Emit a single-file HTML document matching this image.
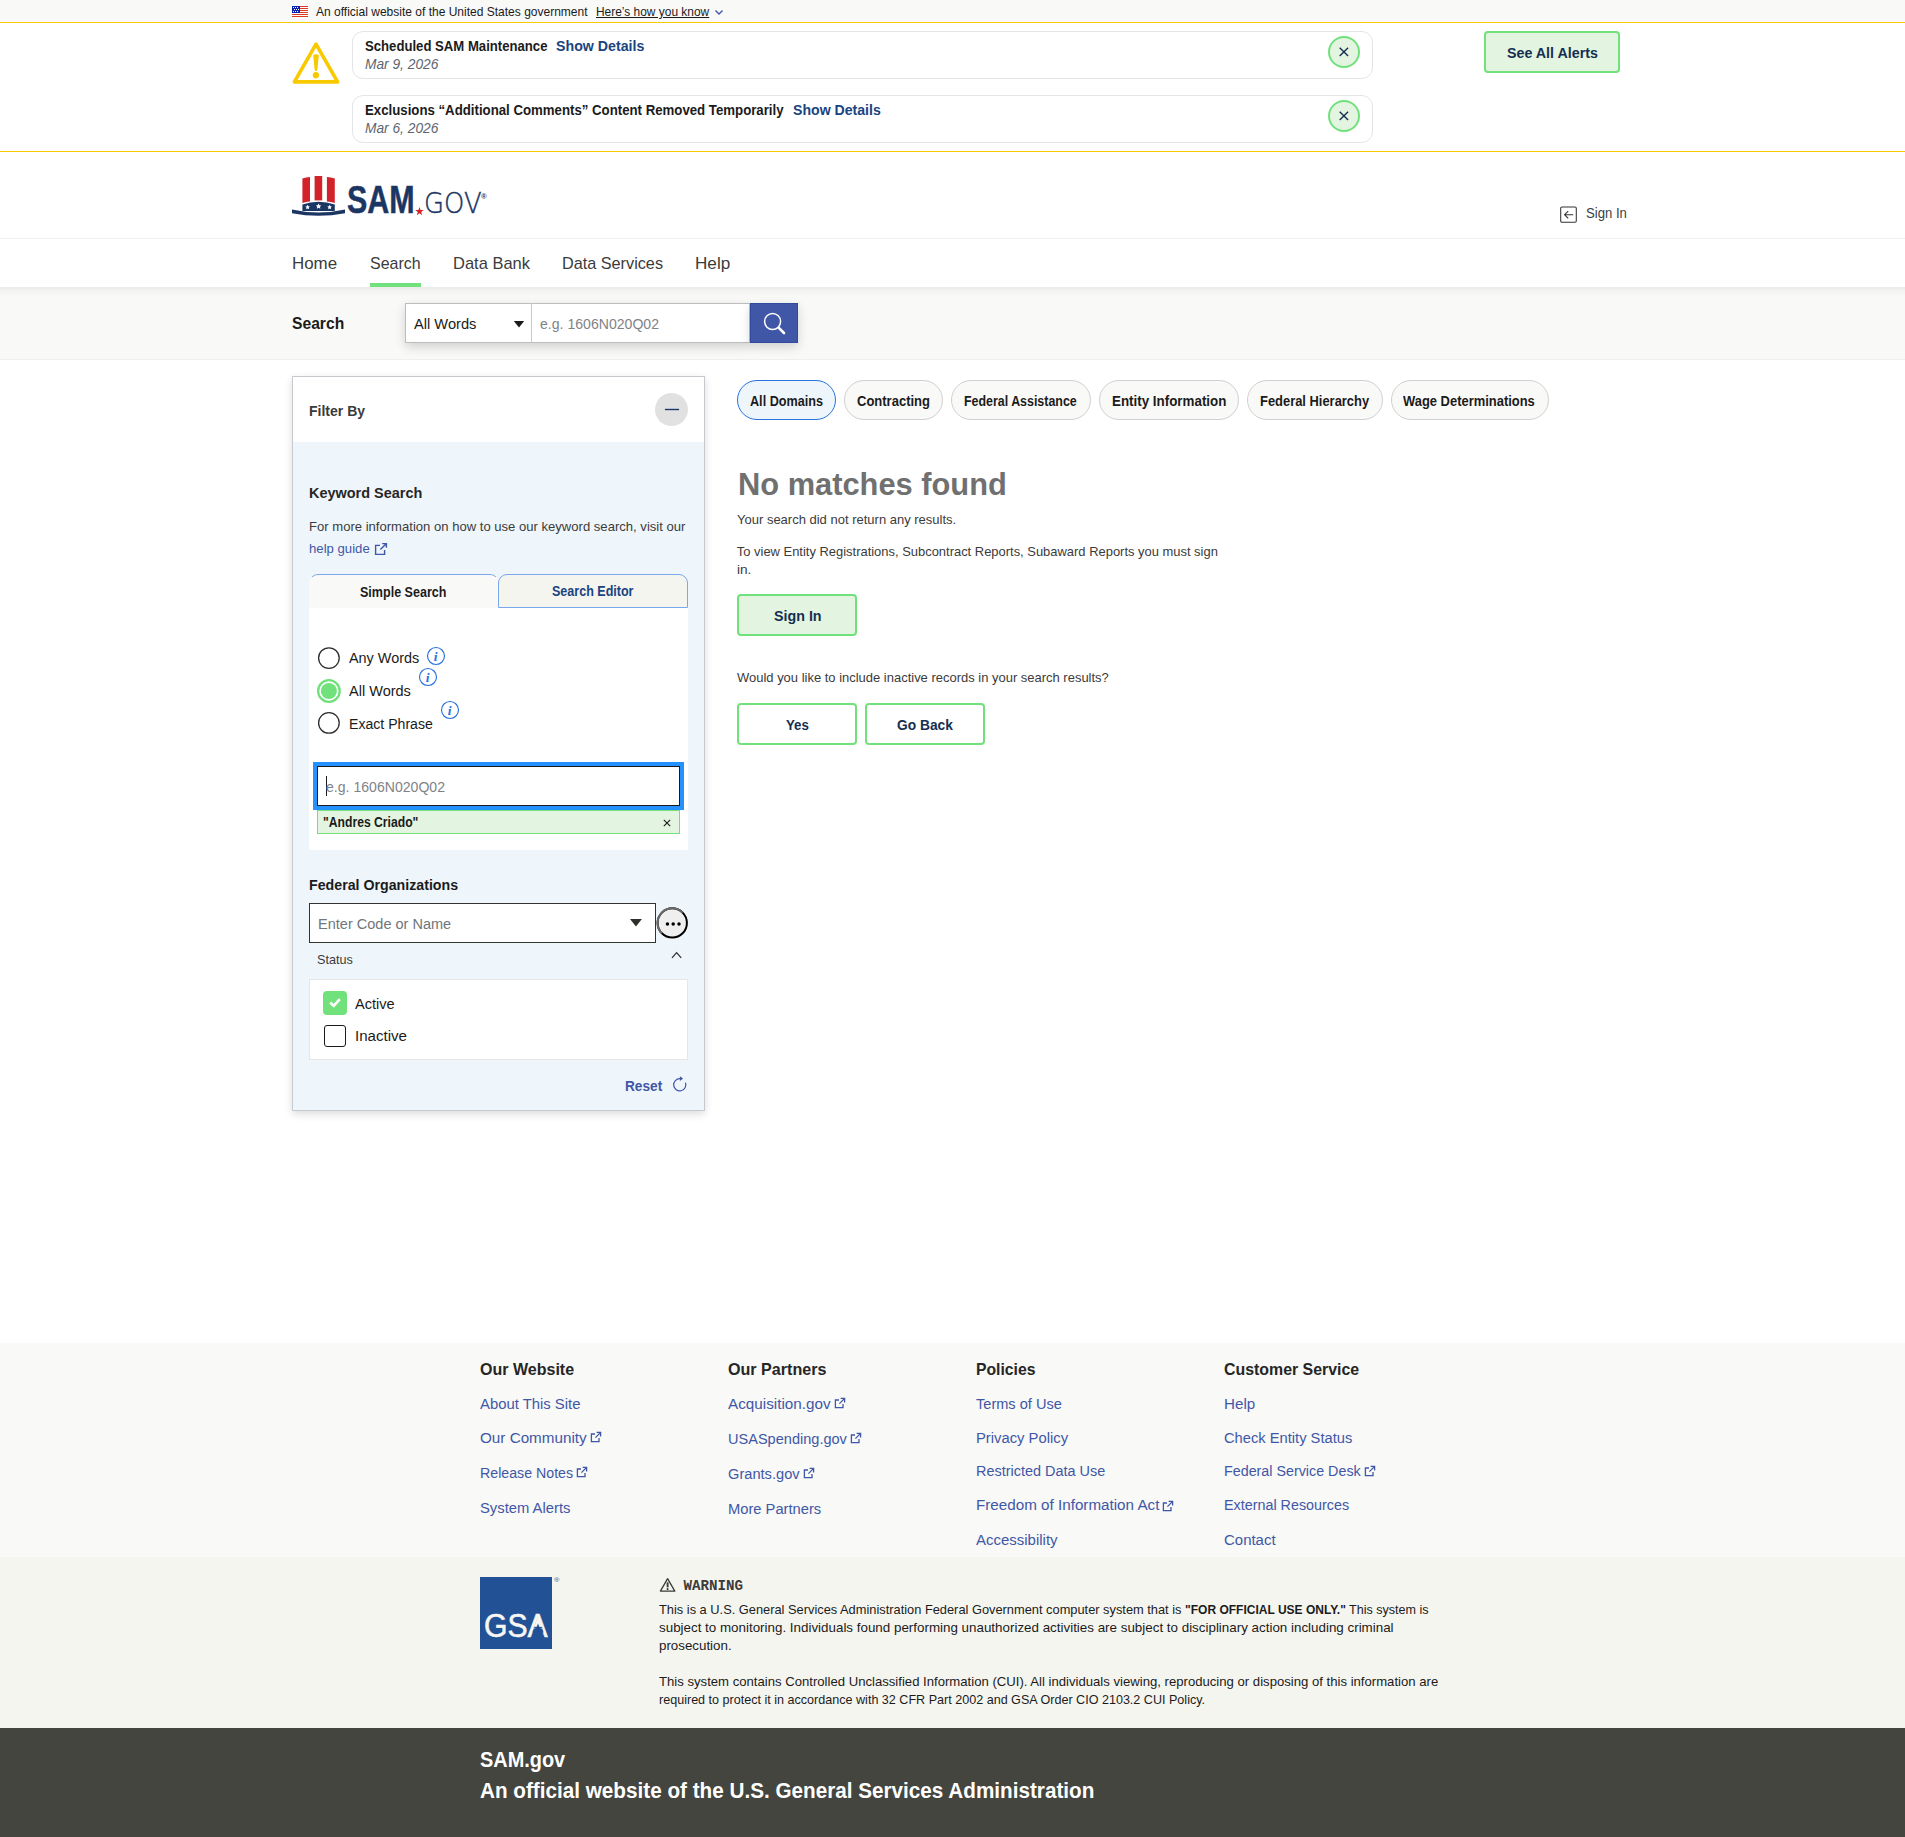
<!DOCTYPE html>
<html lang="en"><head><meta charset="utf-8"><title>SAM.gov | Search</title>
<style>
html,body{margin:0;padding:0}
body{width:1905px;height:1837px;position:relative;overflow:hidden;background:#fff;font-family:'Liberation Sans',sans-serif;color:#1b1b1b}
#page div,#page svg,#page span.t{position:absolute}
#page div{box-sizing:border-box}
span.t{white-space:pre;line-height:1;transform-origin:0 50%}
</style></head><body><div id="page" style="position:absolute;left:0;top:0;width:1905px;height:1837px">
<div style="left:0px;top:0px;width:1905px;height:22px;background:#f9f9f7"></div>
<div style="left:0px;top:22px;width:1905px;height:1px;background:#f9c900"></div>
<div style="left:0px;top:151px;width:1905px;height:1px;background:#f9c900"></div>
<div style="left:352px;top:31px;width:1021px;height:48px;border:1px solid #e4e5e6;border-radius:11px;background:#fff"></div>
<div style="left:1328px;top:36px;width:32px;height:32px;border:2px solid #70e17b;border-radius:50%;background:#e3f5e1"></div>
<div style="left:352px;top:95px;width:1021px;height:48px;border:1px solid #e4e5e6;border-radius:11px;background:#fff"></div>
<div style="left:1328px;top:100px;width:32px;height:32px;border:2px solid #70e17b;border-radius:50%;background:#e3f5e1"></div>
<div style="left:1484px;top:31px;width:136px;height:42px;border:2px solid #70e17b;border-radius:4px;background:#e3f5e1"></div>
<div style="left:0px;top:238px;width:1905px;height:1px;background:#f0f0ee"></div>
<div style="left:370px;top:283px;width:51px;height:4px;background:#70e17b"></div>
<div style="left:0px;top:287px;width:1905px;height:72px;background:linear-gradient(#ebebe9 0,#f5f5f3 5px,#f9f9f7 10px);"></div>
<div style="left:0px;top:359px;width:1905px;height:1px;background:#f0f0f0"></div>
<div style="left:405px;top:303px;width:345px;height:40px;background:#fff;border:1px solid #bdbdbd;box-shadow:0 4px 10px rgba(0,0,0,.16)"></div>
<div style="left:531px;top:303px;width:1px;height:40px;background:#c9c9c9"></div>
<div style="left:750px;top:303px;width:48px;height:40px;background:#3f57a6;border:1px solid #2f4a9f;box-shadow:0 4px 10px rgba(0,0,0,.16)"></div>
<div style="left:292px;top:376px;width:413px;height:735px;background:#eff6fb;border:1px solid #c6cace;box-shadow:0 3px 8px rgba(0,0,0,.14)"></div>
<div style="left:293px;top:377px;width:411px;height:65px;background:#fff"></div>
<div style="left:655px;top:393px;width:33px;height:33px;background:#e1e1e1;border-radius:50%"></div>
<div style="left:309px;top:574px;width:190px;height:35px;background:#f9f9f7;border:1px solid #7aa7ee;border-bottom:none;border-radius:9px 9px 0 0;border-left-color:transparent;border-right-color:transparent"></div>
<div style="left:498px;top:574px;width:190px;height:34px;background:#f5f5f0;border:1px solid #7aa7ee;border-radius:9px 9px 0 0"></div>
<div style="left:309px;top:608px;width:379px;height:242px;background:#fff"></div>
<div style="left:313px;top:762px;width:371px;height:48px;background:#2491ff"></div>
<div style="left:317px;top:766px;width:363px;height:40px;background:#fff;border:1px solid #1b1b1b"></div>
<div style="left:326px;top:776px;width:1px;height:20px;background:#1b1b1b"></div>
<div style="left:317px;top:810px;width:363px;height:24px;background:#e3f5e1;border:1px solid #70e17b"></div>
<div style="left:309px;top:903px;width:347px;height:40px;background:#fff;border:1px solid #33332f"></div>
<div style="left:309px;top:979px;width:379px;height:81px;background:#fff;border:1px solid #e6e6e6"></div>
<div style="left:323px;top:991px;width:24px;height:24px;background:#70e17b;border-radius:4px"></div>
<div style="left:324px;top:1025px;width:22px;height:22px;background:#fff;border:1.5px solid #1b1b1b;border-radius:3px"></div>
<div style="left:737px;top:380px;width:99px;height:40px;background:#eff6fb;border:1px solid #2672de;border-radius:20px"></div>
<div style="left:844px;top:380px;width:98.6px;height:40px;background:#f9f9f7;border:1px solid #d0d0d0;border-radius:20px"></div>
<div style="left:951.1px;top:380px;width:139.7px;height:40px;background:#f9f9f7;border:1px solid #d0d0d0;border-radius:20px"></div>
<div style="left:1099.3px;top:380px;width:139.6px;height:40px;background:#f9f9f7;border:1px solid #d0d0d0;border-radius:20px"></div>
<div style="left:1247.4px;top:380px;width:135.2px;height:40px;background:#f9f9f7;border:1px solid #d0d0d0;border-radius:20px"></div>
<div style="left:1390.6px;top:380px;width:158.4px;height:40px;background:#f9f9f7;border:1px solid #d0d0d0;border-radius:20px"></div>
<div style="left:737px;top:594px;width:120px;height:42px;border:2px solid #70e17b;border-radius:4px;background:#e3f5e1"></div>
<div style="left:737px;top:703px;width:120px;height:42px;border:2px solid #70e17b;border-radius:4px;background:#fff"></div>
<div style="left:865px;top:703px;width:120px;height:42px;border:2px solid #70e17b;border-radius:4px;background:#fff"></div>
<div style="left:0px;top:1343px;width:1905px;height:214px;background:#f9f9f7"></div>
<div style="left:0px;top:1557px;width:1905px;height:171px;background:#f5f5f0"></div>
<div style="left:0px;top:1728px;width:1905px;height:109px;background:#454540"></div>
<div style="left:480px;top:1577px;width:72px;height:72px;background:#235196"></div>
<svg style="left:292px;top:5px;shape-rendering:crispEdges;" width="16" height="13" viewBox="0 0 16 13"><rect width="16" height="13" fill="#fff"/><rect x="8" y="1" width="8" height="1" fill="#dc3a1e"/><rect x="8" y="3" width="8" height="1" fill="#dc3a1e"/><rect x="8" y="5" width="8" height="1" fill="#dc3a1e"/><rect x="8" y="7" width="8" height="1" fill="#dc3a1e"/><rect x="0" y="9" width="16" height="1" fill="#dc3a1e"/><rect x="0" y="11" width="16" height="1" fill="#dc3a1e"/><rect x="0" y="1" width="8" height="7" fill="#0c20b2"/><rect x="1" y="2" width="1" height="1" fill="#fff"/><rect x="3" y="2" width="1" height="1" fill="#fff"/><rect x="5" y="2" width="1" height="1" fill="#fff"/><rect x="2" y="4" width="1" height="1" fill="#fff"/><rect x="4" y="4" width="1" height="1" fill="#fff"/><rect x="6" y="4" width="1" height="1" fill="#fff"/><rect x="1" y="6" width="1" height="1" fill="#fff"/><rect x="3" y="6" width="1" height="1" fill="#fff"/><rect x="5" y="6" width="1" height="1" fill="#fff"/></svg>
<svg style="left:714px;top:9px;" width="10" height="7" viewBox="0 0 10 7"><path d="M1.5 1.5 L5 5 L8.5 1.5" fill="none" stroke="#3f57a6" stroke-width="1.4"/></svg>
<svg style="left:290px;top:40px;" width="52" height="46" viewBox="0 0 52 46"><path d="M26 4.2 L47.6 41.9 L4.4 41.9 Z" fill="none" stroke="#f9c900" stroke-width="3.6" stroke-linejoin="round"/><path d="M23.2 15.6 Q23.2 14.2 26 14.2 Q28.8 14.2 28.8 15.6 L27.4 29.8 Q27.3 31 26 31 Q24.7 31 24.6 29.8 Z" fill="#f9c900"/><circle cx="25.9" cy="35.2" r="3.1" fill="#f9c900"/></svg>
<svg style="left:1338px;top:46px;" width="12" height="12" viewBox="0 0 12 12"><path d="M1.7 1.7 L10.1 10.1 M10.1 1.7 L1.7 10.1" stroke="#162e51" stroke-width="1.4" fill="none"/></svg>
<svg style="left:1338px;top:110px;" width="12" height="12" viewBox="0 0 12 12"><path d="M1.7 1.7 L10.1 10.1 M10.1 1.7 L1.7 10.1" stroke="#162e51" stroke-width="1.4" fill="none"/></svg>
<svg style="left:292px;top:176px;" width="53" height="40" viewBox="0 0 53 40"><path d="M10.4 2.6 Q14 1.3 18 1 L18 25.6 Q14 25.8 10.4 27 Z" fill="#d2232a"/><path d="M22.6 0 L30.2 0 L30.2 24.4 L22.6 24.4 Z" fill="#d2232a"/><path d="M34.9 1 Q39 1.3 42.8 2.6 L42.8 27 Q39 25.8 34.9 25.6 Z" fill="#d2232a"/><path d="M10.4 28.6 Q26.5 23 42.8 28.6 L42.8 35 L10.4 35 Z" fill="#1c3664"/><path d="M0 33.4 Q26.5 39.5 53 33.4 L53 37.2 Q26.5 42.5 0 37.2 Z" fill="#1c3664"/><path id="st" d="M0 -2 L0.59 -0.81 L1.9 -0.62 L0.95 0.31 L1.18 1.62 L0 1 L-1.18 1.62 L-0.95 0.31 L-1.9 -0.62 L-0.59 -0.81 Z" fill="#fff" transform="translate(15.6 31.2) scale(1.25)"/><path d="M0 -2 L0.59 -0.81 L1.9 -0.62 L0.95 0.31 L1.18 1.62 L0 1 L-1.18 1.62 L-0.95 0.31 L-1.9 -0.62 L-0.59 -0.81 Z" fill="#fff" transform="translate(26.6 30.4) scale(1.45)"/><path d="M0 -2 L0.59 -0.81 L1.9 -0.62 L0.95 0.31 L1.18 1.62 L0 1 L-1.18 1.62 L-0.95 0.31 L-1.9 -0.62 L-0.59 -0.81 Z" fill="#fff" transform="translate(37.6 31.2) scale(1.25)"/></svg>
<svg style="left:415px;top:207px;" width="9" height="9" viewBox="0 0 9 9"><path d="M4.5 0 L5.56 3.04 L8.78 3.1 L6.21 5.05 L7.14 8.14 L4.5 6.3 L1.86 8.14 L2.79 5.05 L0.22 3.1 L3.44 3.04 Z" fill="#d2232a"/></svg>
<svg style="left:1559px;top:205px;" width="19" height="19" viewBox="0 0 19 19"><rect x="1.7" y="1.9" width="15.6" height="15.4" rx="1.3" fill="none" stroke="#333" stroke-width="1.05"/><path d="M14.2 9.7 L5.8 9.7 M9.2 6.1 L5.6 9.7 L9.2 13.3" fill="none" stroke="#333" stroke-width="1.1"/></svg>
<svg style="left:513px;top:320px;" width="12" height="8" viewBox="0 0 12 8"><path d="M0.8 1 L11.2 1 L6 7.4 Z" fill="#1b1b1b"/></svg>
<svg style="left:762px;top:311px;" width="26" height="26" viewBox="0 0 26 26"><circle cx="10.6" cy="10.5" r="8" fill="none" stroke="#fff" stroke-width="1.5"/><path d="M16.6 16.6 L22 22" stroke="#fff" stroke-width="2.6" stroke-linecap="round"/></svg>
<svg style="left:660px;top:404px;" width="24" height="12" viewBox="0 0 24 12"><path d="M4.9 5.5 L19.1 5.5" stroke="#1a3668" stroke-width="1.4"/></svg>
<svg style="left:374px;top:541.5px;" width="14" height="14" viewBox="0 0 14 14"><path d="M8.2 1.6 L12.4 1.6 L12.4 5.8 M12.2 1.8 L6.4 7.6 M10.6 8 L10.6 12.4 L1.6 12.4 L1.6 3.4 L6 3.4" fill="none" stroke="#3f57a6" stroke-width="1.4"/></svg>
<svg style="left:316px;top:645px;" width="26" height="90" viewBox="0 0 26 90"><circle cx="12.9" cy="13.1" r="10.3" fill="#fff" stroke="#2e2e2e" stroke-width="1.3"/><circle cx="12.9" cy="46" r="10.8" fill="#fff" stroke="#70e17b" stroke-width="2.3"/><circle cx="12.9" cy="46" r="8" fill="#70e17b"/><circle cx="12.9" cy="77.9" r="10.3" fill="#fff" stroke="#2e2e2e" stroke-width="1.3"/></svg>
<svg style="left:426.1px;top:646.2px;" width="20" height="20" viewBox="0 0 20 20"><circle cx="10" cy="10" r="8.5" fill="none" stroke="#2672de" stroke-width="1.15"/><text x="9.7" y="14.5" text-anchor="middle" font-family="'Liberation Serif',serif" font-style="italic" font-weight="700" font-size="13.5" fill="#2672de">i</text></svg>
<svg style="left:418.1px;top:667.2px;" width="20" height="20" viewBox="0 0 20 20"><circle cx="10" cy="10" r="8.5" fill="none" stroke="#2672de" stroke-width="1.15"/><text x="9.7" y="14.5" text-anchor="middle" font-family="'Liberation Serif',serif" font-style="italic" font-weight="700" font-size="13.5" fill="#2672de">i</text></svg>
<svg style="left:440.1px;top:700.2px;" width="20" height="20" viewBox="0 0 20 20"><circle cx="10" cy="10" r="8.5" fill="none" stroke="#2672de" stroke-width="1.15"/><text x="9.7" y="14.5" text-anchor="middle" font-family="'Liberation Serif',serif" font-style="italic" font-weight="700" font-size="13.5" fill="#2672de">i</text></svg>
<svg style="left:663px;top:819px;" width="8" height="8" viewBox="0 0 8 8"><path d="M0.8 0.8 L7.2 7.2 M7.2 0.8 L0.8 7.2" stroke="#1b1b1b" stroke-width="1.1" fill="none"/></svg>
<svg style="left:629px;top:918px;" width="14" height="10" viewBox="0 0 14 10"><path d="M1 1 L12.9 1 L6.95 8.5 Z" fill="#2e2e2a"/></svg>
<svg style="left:655px;top:906px;" width="35" height="35" viewBox="0 0 35 35"><circle cx="17.25" cy="16.95" r="14.65" fill="#efefef" stroke="#000" stroke-width="2"/><path d="M27.61 6.59 A14.65 14.65 0 0 0 6.89 27.31" fill="none" stroke="#6a6a6a" stroke-width="2"/></svg>
<svg style="left:660px;top:918px;" width="26" height="12" viewBox="0 0 26 12"><circle cx="7.45" cy="6.1" r="1.75" fill="#000"/><circle cx="13.2" cy="6.1" r="1.75" fill="#000"/><circle cx="19" cy="6.1" r="1.75" fill="#000"/></svg>
<svg style="left:670px;top:951px;" width="13" height="9" viewBox="0 0 13 9"><path d="M2 6.9 L6.6 1.6 L11.2 6.9" fill="none" stroke="#2e2e2e" stroke-width="1.2"/></svg>
<svg style="left:323px;top:991px;" width="24" height="24" viewBox="0 0 24 24"><path d="M7.2 11.6 L10.7 14.8 L16.8 8.2" fill="none" stroke="#fff" stroke-width="2.7" /></svg>
<svg style="left:672px;top:1075px;" width="16" height="17" viewBox="0 0 16 17"><path d="M13.5 7.7 A6.1 6.1 0 1 1 8 3.7" fill="none" stroke="#3f57a6" stroke-width="1.2"/><path d="M7.9 1.2 L11.1 3.6 L7.9 5.9 Z" fill="#3f57a6"/></svg>
<svg style="left:589.8px;top:1430.9px;" width="12" height="12" viewBox="0 0 12 12"><path d="M6.6 1.4 L10.6 1.4 L10.6 5.4 M10.4 1.6 L5.4 6.6 M9 7 L9 10.6 L1.4 10.6 L1.4 3 L5 3" fill="none" stroke="#3f57a6" stroke-width="1.3"/></svg>
<svg style="left:576.3px;top:1466px;" width="12" height="12" viewBox="0 0 12 12"><path d="M6.6 1.4 L10.6 1.4 L10.6 5.4 M10.4 1.6 L5.4 6.6 M9 7 L9 10.6 L1.4 10.6 L1.4 3 L5 3" fill="none" stroke="#3f57a6" stroke-width="1.3"/></svg>
<svg style="left:833.6px;top:1396.7px;" width="12" height="12" viewBox="0 0 12 12"><path d="M6.6 1.4 L10.6 1.4 L10.6 5.4 M10.4 1.6 L5.4 6.6 M9 7 L9 10.6 L1.4 10.6 L1.4 3 L5 3" fill="none" stroke="#3f57a6" stroke-width="1.3"/></svg>
<svg style="left:850.3px;top:1431.9px;" width="12" height="12" viewBox="0 0 12 12"><path d="M6.6 1.4 L10.6 1.4 L10.6 5.4 M10.4 1.6 L5.4 6.6 M9 7 L9 10.6 L1.4 10.6 L1.4 3 L5 3" fill="none" stroke="#3f57a6" stroke-width="1.3"/></svg>
<svg style="left:802.6px;top:1467.1px;" width="12" height="12" viewBox="0 0 12 12"><path d="M6.6 1.4 L10.6 1.4 L10.6 5.4 M10.4 1.6 L5.4 6.6 M9 7 L9 10.6 L1.4 10.6 L1.4 3 L5 3" fill="none" stroke="#3f57a6" stroke-width="1.3"/></svg>
<svg style="left:1162.3px;top:1499.5px;" width="12" height="12" viewBox="0 0 12 12"><path d="M6.6 1.4 L10.6 1.4 L10.6 5.4 M10.4 1.6 L5.4 6.6 M9 7 L9 10.6 L1.4 10.6 L1.4 3 L5 3" fill="none" stroke="#3f57a6" stroke-width="1.3"/></svg>
<svg style="left:1363.8px;top:1465.4px;" width="12" height="12" viewBox="0 0 12 12"><path d="M6.6 1.4 L10.6 1.4 L10.6 5.4 M10.4 1.6 L5.4 6.6 M9 7 L9 10.6 L1.4 10.6 L1.4 3 L5 3" fill="none" stroke="#3f57a6" stroke-width="1.3"/></svg>
<svg style="left:658.5px;top:1577px;" width="18" height="16" viewBox="0 0 18 16"><path d="M8.6 1.7 L15.8 14.1 L1.4 14.1 Z" fill="none" stroke="#3a3a38" stroke-width="1.3" stroke-linejoin="round"/><path d="M8.6 5.3 L8.6 10.3" stroke="#3a3a38" stroke-width="1.9"/><circle cx="8.6" cy="12.1" r="1.05" fill="#3a3a38"/></svg>
<span class="t" style="left:315.8px;top:6.00px;font-size:12.56px;transform:scaleX(0.9575);">An official website of the United States government</span>
<span class="t" style="left:595.8px;top:6.00px;font-size:12.56px;transform:scaleX(0.9510);text-decoration:underline;">Here’s how you know</span>
<span class="t" style="left:365.4px;top:40.00px;font-size:13.95px;font-weight:700;transform:scaleX(0.9425);">Scheduled SAM Maintenance</span>
<span class="t" style="left:555.8px;top:40.00px;font-size:13.95px;font-weight:700;color:#1a4480;transform:scaleX(1.0179);">Show Details</span>
<span class="t" style="left:365.4px;top:57.00px;font-size:14.69px;color:#5d6570;font-style:italic;transform:scaleX(0.9351);">Mar 9, 2026</span>
<span class="t" style="left:365.4px;top:104.00px;font-size:13.95px;font-weight:700;transform:scaleX(0.9488);">Exclusions “Additional Comments” Content Removed Temporarily</span>
<span class="t" style="left:792.8px;top:104.00px;font-size:13.95px;font-weight:700;color:#1a4480;transform:scaleX(1.0121);">Show Details</span>
<span class="t" style="left:365.4px;top:121.00px;font-size:14.69px;color:#5d6570;font-style:italic;transform:scaleX(0.9351);">Mar 6, 2026</span>
<span class="t" style="left:1506.7px;top:45.00px;font-size:15.5px;font-weight:700;color:#162e51;transform:scaleX(0.9201);">See All Alerts</span>
<span class="t" style="left:346.8px;top:181.00px;font-size:38.2px;font-weight:700;color:#1c3664;transform:scaleX(0.7966);-webkit-text-stroke:0.5px #1c3664;">SAM</span>
<span class="t" style="left:424px;top:189.00px;font-size:29px;font-weight:200;color:#1c3664;font-family:'DejaVu Sans Light','DejaVu Sans',sans-serif;transform:scaleX(0.8911);-webkit-text-stroke:0.45px #1c3664;">GOV</span>
<span class="t" style="left:481.1px;top:193.00px;font-size:7px;font-weight:700;color:#1c3664;transform:scaleX(1.1021);">®</span>
<span class="t" style="left:1585.7px;top:205.00px;font-size:15.5px;color:#383e47;transform:scaleX(0.8474);">Sign In</span>
<span class="t" style="left:292.2px;top:256.00px;font-size:16.81px;color:#3b3b3b;transform:scaleX(1.0064);">Home</span>
<span class="t" style="left:370px;top:256.00px;font-size:16.81px;color:#3b3b3b;transform:scaleX(0.9505);">Search</span>
<span class="t" style="left:453.3px;top:256.00px;font-size:16.81px;color:#3b3b3b;transform:scaleX(0.9817);">Data Bank</span>
<span class="t" style="left:562.3px;top:256.00px;font-size:16.81px;color:#3b3b3b;transform:scaleX(0.9659);">Data Services</span>
<span class="t" style="left:695.3px;top:256.00px;font-size:16.81px;color:#3b3b3b;transform:scaleX(1.0189);">Help</span>
<span class="t" style="left:292.2px;top:316.00px;font-size:16.81px;font-weight:700;transform:scaleX(0.9316);">Search</span>
<span class="t" style="left:413.8px;top:316.00px;font-size:15.5px;transform:scaleX(0.9448);">All Words</span>
<span class="t" style="left:540.2px;top:316.00px;font-size:15.5px;color:#7f8388;transform:scaleX(0.9084);">e.g. 1606N020Q02</span>
<span class="t" style="left:309.4px;top:404.00px;font-size:14.88px;font-weight:700;color:#3b3b3b;transform:scaleX(0.9426);">Filter By</span>
<span class="t" style="left:309.4px;top:487.00px;font-size:13.84px;font-weight:700;color:#262626;transform:scaleX(1.0454);">Keyword Search</span>
<span class="t" style="left:309.4px;top:521.00px;font-size:12.95px;color:#3b3b3b;transform:scaleX(1.0105);">For more information on how to use our keyword search, visit our</span>
<span class="t" style="left:309.4px;top:543.00px;font-size:12.95px;color:#3f57a6;transform:scaleX(1.0164);">help guide</span>
<span class="t" style="left:359.9px;top:586.00px;font-size:13.84px;font-weight:700;transform:scaleX(0.9065);">Simple Search</span>
<span class="t" style="left:552.3px;top:585.00px;font-size:13.84px;font-weight:700;color:#1a4480;transform:scaleX(0.9063);">Search Editor</span>
<span class="t" style="left:349.1px;top:650.00px;font-size:15.5px;transform:scaleX(0.9294);">Any Words</span>
<span class="t" style="left:349.1px;top:683.00px;font-size:15.5px;transform:scaleX(0.9372);">All Words</span>
<span class="t" style="left:349.1px;top:716.00px;font-size:15.5px;transform:scaleX(0.9090);">Exact Phrase</span>
<span class="t" style="left:326.4px;top:779.00px;font-size:15.5px;color:#7f8388;transform:scaleX(0.9084);">e.g. 1606N020Q02</span>
<span class="t" style="left:323.2px;top:816.00px;font-size:13.84px;font-weight:700;transform:scaleX(0.8801);">&quot;Andres Criado&quot;</span>
<span class="t" style="left:309.4px;top:878.00px;font-size:14.88px;font-weight:700;transform:scaleX(0.9543);">Federal Organizations</span>
<span class="t" style="left:318.4px;top:916.00px;font-size:15.5px;color:#71767a;transform:scaleX(0.9370);">Enter Code or Name</span>
<span class="t" style="left:317.4px;top:953.00px;font-size:13.21px;color:#3b3b3b;transform:scaleX(0.9563);">Status</span>
<span class="t" style="left:355.3px;top:996.00px;font-size:15.5px;transform:scaleX(0.9403);">Active</span>
<span class="t" style="left:355.3px;top:1028.00px;font-size:15.5px;transform:scaleX(0.9734);">Inactive</span>
<span class="t" style="left:625.1px;top:1078.00px;font-size:15.5px;font-weight:700;color:#3f57a6;transform:scaleX(0.8811);">Reset</span>
<span class="t" style="left:750.1px;top:395.00px;font-size:13.84px;font-weight:700;transform:scaleX(0.9134);">All Domains</span>
<span class="t" style="left:857.2px;top:395.00px;font-size:13.84px;font-weight:700;transform:scaleX(0.9408);">Contracting</span>
<span class="t" style="left:964.3px;top:395.00px;font-size:13.84px;font-weight:700;transform:scaleX(0.8977);">Federal Assistance</span>
<span class="t" style="left:1111.6px;top:395.00px;font-size:13.84px;font-weight:700;transform:scaleX(0.9669);">Entity Information</span>
<span class="t" style="left:1260.1px;top:395.00px;font-size:13.84px;font-weight:700;transform:scaleX(0.9337);">Federal Hierarchy</span>
<span class="t" style="left:1403.4px;top:395.00px;font-size:13.84px;font-weight:700;transform:scaleX(0.9356);">Wage Determinations</span>
<span class="t" style="left:738px;top:469.00px;font-size:31.69px;font-weight:700;color:#707070;transform:scaleX(0.9725);">No matches found</span>
<span class="t" style="left:736.8px;top:514.00px;font-size:12.95px;color:#3b3b3b;transform:scaleX(1.0048);">Your search did not return any results.</span>
<span class="t" style="left:736.8px;top:546.00px;font-size:12.95px;color:#3b3b3b;">To view Entity Registrations, Subcontract Reports, Subaward Reports you must sign</span>
<span class="t" style="left:736.8px;top:564.00px;font-size:12.95px;color:#3b3b3b;transform:scaleX(1.0533);">in.</span>
<span class="t" style="left:773.5px;top:608.00px;font-size:15.35px;font-weight:700;color:#162e51;transform:scaleX(0.9305);">Sign In</span>
<span class="t" style="left:736.8px;top:672.00px;font-size:12.95px;color:#3b3b3b;transform:scaleX(1.0026);">Would you like to include inactive records in your search results?</span>
<span class="t" style="left:785.8px;top:717.00px;font-size:15.35px;font-weight:700;color:#162e51;transform:scaleX(0.8652);">Yes</span>
<span class="t" style="left:897.3px;top:717.00px;font-size:15.35px;font-weight:700;color:#162e51;transform:scaleX(0.8978);">Go Back</span>
<span class="t" style="left:479.8px;top:1362.00px;font-size:16.81px;font-weight:700;color:#262626;transform:scaleX(0.9541);">Our Website</span>
<span class="t" style="left:728px;top:1362.00px;font-size:16.81px;font-weight:700;color:#262626;transform:scaleX(0.9582);">Our Partners</span>
<span class="t" style="left:975.8px;top:1362.00px;font-size:16.81px;font-weight:700;color:#262626;transform:scaleX(0.9370);">Policies</span>
<span class="t" style="left:1224.1px;top:1362.00px;font-size:16.81px;font-weight:700;color:#262626;transform:scaleX(0.9458);">Customer Service</span>
<span class="t" style="left:479.8px;top:1397.00px;font-size:14.88px;color:#3f57a6;transform:scaleX(0.9979);">About This Site</span>
<span class="t" style="left:479.8px;top:1431.00px;font-size:14.88px;color:#3f57a6;transform:scaleX(1.0244);">Our Community</span>
<span class="t" style="left:479.8px;top:1466.00px;font-size:14.88px;color:#3f57a6;transform:scaleX(0.9541);">Release Notes</span>
<span class="t" style="left:479.8px;top:1501.00px;font-size:14.88px;color:#3f57a6;transform:scaleX(0.9941);">System Alerts</span>
<span class="t" style="left:728px;top:1397.00px;font-size:14.88px;color:#3f57a6;transform:scaleX(1.0254);">Acquisition.gov</span>
<span class="t" style="left:728px;top:1432.00px;font-size:14.88px;color:#3f57a6;transform:scaleX(0.9780);">USASpending.gov</span>
<span class="t" style="left:728px;top:1467.00px;font-size:14.88px;color:#3f57a6;transform:scaleX(0.9840);">Grants.gov</span>
<span class="t" style="left:728px;top:1502.00px;font-size:14.88px;color:#3f57a6;transform:scaleX(0.9889);">More Partners</span>
<span class="t" style="left:975.8px;top:1397.00px;font-size:14.88px;color:#3f57a6;transform:scaleX(0.9792);">Terms of Use</span>
<span class="t" style="left:975.8px;top:1431.00px;font-size:14.88px;color:#3f57a6;transform:scaleX(0.9948);">Privacy Policy</span>
<span class="t" style="left:975.8px;top:1464.00px;font-size:14.88px;color:#3f57a6;transform:scaleX(0.9714);">Restricted Data Use</span>
<span class="t" style="left:975.8px;top:1498.00px;font-size:14.88px;color:#3f57a6;transform:scaleX(1.0222);">Freedom of Information Act</span>
<span class="t" style="left:975.8px;top:1533.00px;font-size:14.88px;color:#3f57a6;transform:scaleX(1.0072);">Accessibility</span>
<span class="t" style="left:1224.1px;top:1397.00px;font-size:14.88px;color:#3f57a6;transform:scaleX(1.0198);">Help</span>
<span class="t" style="left:1224.1px;top:1431.00px;font-size:14.88px;color:#3f57a6;transform:scaleX(0.9883);">Check Entity Status</span>
<span class="t" style="left:1224.1px;top:1464.00px;font-size:14.88px;color:#3f57a6;transform:scaleX(0.9613);">Federal Service Desk</span>
<span class="t" style="left:1224.1px;top:1498.00px;font-size:14.88px;color:#3f57a6;transform:scaleX(0.9637);">External Resources</span>
<span class="t" style="left:1224.1px;top:1533.00px;font-size:14.88px;color:#3f57a6;transform:scaleX(1.0065);">Contact</span>
<span class="t" style="left:483.7px;top:1609.00px;font-size:33.4px;color:#f7f7f3;transform:scaleX(0.9033);-webkit-text-stroke:0.55px #f7f7f3;">GSA</span>
<span class="t" style="left:554.3px;top:1577.00px;font-size:6px;color:#27508f;transform:scaleX(1.2212);">®</span>
<span class="t" style="left:683.4px;top:1579.00px;font-size:14.2px;font-weight:700;color:#3b3b3b;font-family:'Liberation Mono',monospace;">WARNING</span>
<span class="t" style="left:659.3px;top:1604.00px;font-size:12.95px;transform:scaleX(0.9914);">This is a U.S. General Services Administration Federal Government computer system that is</span>
<span class="t" style="left:1184.7px;top:1604.00px;font-size:12.95px;font-weight:700;transform:scaleX(0.9285);">&quot;FOR OFFICIAL USE ONLY.&quot;</span>
<span class="t" style="left:1349px;top:1604.00px;font-size:12.95px;transform:scaleX(0.9701);">This system is</span>
<span class="t" style="left:659.3px;top:1622.00px;font-size:12.95px;transform:scaleX(1.0339);">subject to monitoring. Individuals found performing unauthorized activities are subject to disciplinary action including criminal</span>
<span class="t" style="left:659.3px;top:1640.00px;font-size:12.95px;transform:scaleX(1.0300);">prosecution.</span>
<span class="t" style="left:659.3px;top:1676.00px;font-size:12.95px;transform:scaleX(1.0146);">This system contains Controlled Unclassified Information (CUI). All individuals viewing, reproducing or disposing of this information are</span>
<span class="t" style="left:659.3px;top:1694.00px;font-size:12.95px;transform:scaleX(0.9715);">required to protect it in accordance with 32 CFR Part 2002 and GSA Order CIO 2103.2 CUI Policy.</span>
<span class="t" style="left:479.8px;top:1749.00px;font-size:21.72px;font-weight:700;color:#fff;transform:scaleX(0.9169);">SAM.gov</span>
<span class="t" style="left:479.8px;top:1780.00px;font-size:21.72px;font-weight:700;color:#fff;transform:scaleX(0.9526);">An official website of the U.S. General Services Administration</span>
<svg style="left:528px;top:1612px" width="20" height="26" viewBox="0 0 20 26"><path d="M5.9 16 L14.1 16 L15.6 20.4 L4.4 20.4 Z" fill="#235196"/><path d="M10 4 L5.6 16.6 L14.4 16.6 Z" fill="#f7f7f3"/><path d="M10.00 11.50 L11.26 14.66 L14.66 14.89 L12.04 17.06 L12.88 20.36 L10.00 18.55 L7.12 20.36 L7.96 17.06 L5.34 14.89 L8.74 14.66 Z" fill="#235196"/></svg>
</div></body></html>
